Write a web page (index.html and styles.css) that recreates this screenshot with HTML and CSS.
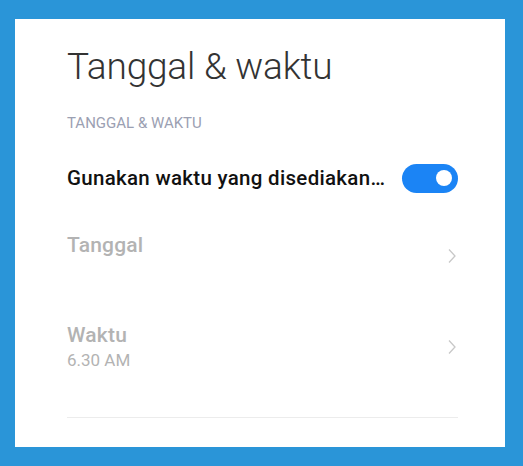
FILE: index.html
```html
<!DOCTYPE html>
<html lang="id">
<head>
    <meta charset="UTF-8">
    <meta name="viewport" content="width=device-width, initial-scale=1.0">
    <title>Tanggal &amp; waktu</title>
    <link rel="stylesheet" href="styles.css">
</head>
<body>
    <div class="panel">
        <h1 class="title">Tanggal &amp; waktu</h1>
        <div class="section-label">TANGGAL &amp; WAKTU</div>
        <div class="row row-switch">
            <span class="row-main">Gunakan waktu yang disediakan…</span>
            <span class="toggle"><span class="knob"></span></span>
        </div>
        <div class="row row-link row-tanggal">
            <div class="row-text">
                <div class="row-title">Tanggal</div>
            </div>
            <svg class="chevron" width="10" height="16" viewBox="0 0 10 16"><path d="M2 1.5 L8 8 L2 14.5" fill="none" stroke="#c8c8c8" stroke-width="1.3"/></svg>
        </div>
        <div class="row row-link row-waktu">
            <div class="row-text">
                <div class="row-title">Waktu</div>
                <div class="row-sub">6.30 AM</div>
            </div>
            <svg class="chevron" width="10" height="16" viewBox="0 0 10 16"><path d="M2 1.5 L8 8 L2 14.5" fill="none" stroke="#c8c8c8" stroke-width="1.3"/></svg>
        </div>
        <div class="divider"></div>
    </div>
</body>
</html>
```
FILE: styles.css
```css
body { margin: 0; padding: 19px 18px 19px 15px; background: #2a95d8; font-family: Roboto, "Noto Sans", sans-serif; }
.panel { background: #fff; height: 428px; padding: 0 47px 0 52px; overflow: hidden; }
.title { margin: 0; padding-top: 25px; font-size: 37px; font-weight: 300; color: #333; line-height: 46px; letter-spacing: -0.2px; }
.section-label { margin-top: 24px; font-size: 15px; color: #9ba0b2; line-height: 18px; }
.row { display: flex; align-items: center; justify-content: space-between; }
.row-switch { margin-top: 29px; height: 34px; }
.row-main { font-size: 20.5px; font-weight: 500; color: #111; letter-spacing: 0.3px; }
.toggle { width: 56px; height: 29px; border-radius: 15px; background: #1b84f5; display: flex; align-items: center; justify-content: flex-end; padding-right: 6px; box-sizing: border-box; }
.knob { width: 16px; height: 16px; border-radius: 50%; background: #fff; }
.row-title { font-size: 21px; font-weight: 500; color: #b3b3b3; line-height: 24px; letter-spacing: 0.2px; }
.row-sub { font-size: 17px; color: #b3b3b3; line-height: 22px; margin-top: 2px; }
.row-tanggal { margin-top: 38px; align-items: flex-start; }
.row-tanggal .chevron { margin-top: 15px; }
.row-waktu { margin-top: 59px; }
.chevron { margin-right: 1px; }
.divider { margin-top: 46px; height: 1px; background: #ececec; }
```
